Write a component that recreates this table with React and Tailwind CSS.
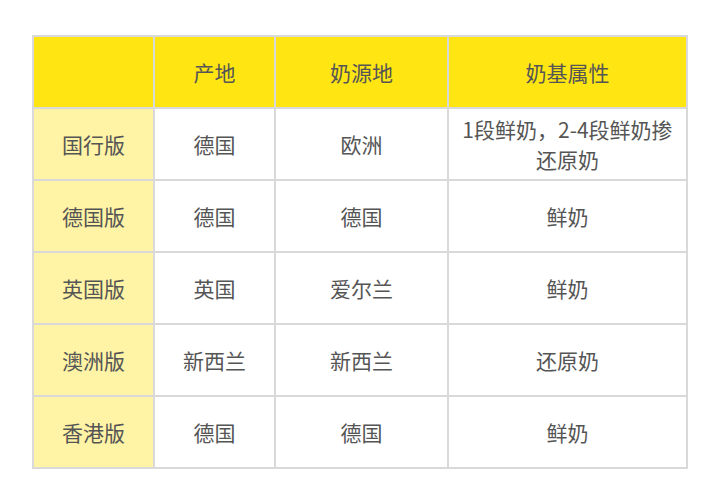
const header = ['', '产地', '奶源地', '奶基属性'];

const rows = [
  ['国行版', '德国', '欧洲', '1段鲜奶，2-4段鲜奶掺还原奶'],
  ['德国版', '德国', '德国', '鲜奶'],
  ['英国版', '英国', '爱尔兰', '鲜奶'],
  ['澳洲版', '新西兰', '新西兰', '还原奶'],
  ['香港版', '德国', '德国', '鲜奶'],
];

export default function App() {
  return (
    <div className="w-[717px] h-[503px] bg-white pt-[35px] pl-[32px] font-['Noto_Sans_CJK_SC',sans-serif] text-[21px] leading-[30px] text-[#555555]">
      <div className="grid w-fit grid-cols-[119px_119px_171px_237px] auto-rows-[70px] gap-[2px] p-[2px] bg-[#d9d9d9]">
        {header.map((h, i) => (
          <div key={'h' + i} className="flex items-center justify-center bg-[#ffe512] text-center">
            {h}
          </div>
        ))}
        {rows.map((r, ri) =>
          r.map((c, ci) => (
            <div
              key={ri + '-' + ci}
              className={
                ci === 0
                  ? 'flex items-center justify-center bg-[#fff3a6] text-center'
                  : 'flex items-center justify-center bg-white text-center px-[6px]'
              }
            >
              {c}
            </div>
          ))
        )}
      </div>
    </div>
  );
}
